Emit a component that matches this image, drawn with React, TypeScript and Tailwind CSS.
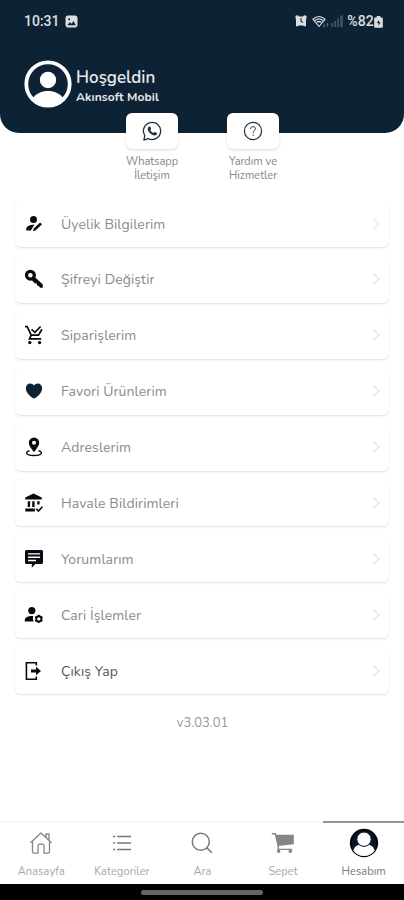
import React from 'react';
import { IoHeart } from 'react-icons/io5';

const UserEditIcon = () => (
  <svg viewBox="0 0 18 18" className="w-[18px] h-[18px]" fill="currentColor">
    <circle cx="8.500" cy="4.600" r="3.500" />
    <path d="M1.200 15.600v-1.500c0-2.600 3.400-4.200 7.600-4.300h.6L5.800 15.600Z" />
    <path d="m8 15.900.7-2.500 6.400-6 1.900 1.800-6.500 6.200Z" />
  </svg>
);

const KeyIcon = () => (
  <svg viewBox="0 0 20 20" className="w-5 h-5">
    <circle cx="6.400" cy="6.200" r="3.900" fill="none" stroke="currentColor" strokeWidth="3.200" />
    <path d="m9.500 6.800 9.300 8.700v3.200h-2.600l-1.700-1.900-1.300-.3-.4-1.900-2.100-.4-3.400-3.400Z" fill="currentColor" />
  </svg>
);

const CartCheckIcon = () => (
  <svg viewBox="0 0 20 20" className="w-5 h-5" fill="none" stroke="currentColor" strokeWidth="1.700">
    <path d="M1 1.700h2.200l4 8.500h7.300l3.500-6M7.200 10.200l-1.700 3.600h11.700M7.500 4.300l3.400 3 5.700-5.800" />
    <circle cx="5.800" cy="17.600" r="1.700" fill="currentColor" stroke="none" />
    <circle cx="15.600" cy="17.600" r="1.700" fill="currentColor" stroke="none" />
  </svg>
);

const PinIcon = () => (
  <svg viewBox="0 0 18 20" className="w-[18px] h-5">
    <path fillRule="evenodd" fill="currentColor" d="M9 .5a5.200 5.200 0 0 0-5.200 5.200C3.800 9.500 9 15 9 15s5.200-5.500 5.200-9.300A5.200 5.200 0 0 0 9 .5Zm0 3.300a2 2 0 1 1 0 4 2 2 0 0 1 0-4Z" />
    <path fill="none" stroke="currentColor" strokeWidth="1.400" d="M4.600 13.700c-1.900.6-3 1.300-3 2.100 0 1.500 3.300 2.700 7.400 2.700s7.400-1.200 7.400-2.700c0-.8-1.100-1.500-3-2.100" />
  </svg>
);

const BankIcon = () => (
  <svg viewBox="0 0 20 20" className="w-5 h-5" fill="currentColor">
    <path d="M9.500.5 1.200 4.600v1.900h16.600V4.600ZM3.700 8.200h2.400V14H3.700ZM8.200 8.200h2.400V14H8.200ZM13.200 8.200h2.400v3.300h-2.400ZM1.300 15.500h9.600v3H1.300Z" />
    <path d="m12.200 15.800 2.200 2.200 4-4.200" fill="none" stroke="currentColor" strokeWidth="1.600" />
  </svg>
);

const CommentIcon = () => (
  <svg viewBox="0 0 20 20" className="w-5 h-5">
    <path d="M2.500 1h15c.8 0 1.500.7 1.500 1.500v11c0 .8-.7 1.500-1.500 1.500h-6.300l-3.400 3.800V15H2.500c-.8 0-1.500-.7-1.500-1.500v-11C1 1.700 1.700 1 2.500 1Z" fill="currentColor" />
    <path d="M4 4.900h12M4 8.200h12M4 11.500h8" stroke="white" strokeWidth="1.400" />
  </svg>
);

const UserCogIcon = () => (
  <svg viewBox="0 0 20 18" className="w-5 h-[18px]">
    <circle cx="7.800" cy="4.600" r="3.600" fill="currentColor" />
    <path d="M.8 15.500v-1.700c0-2.500 3.500-3.900 7-3.900h1.400a6.300 6.300 0 0 0 .6 5.600Z" fill="currentColor" />
    <circle cx="14.800" cy="12.900" r="2.600" fill="none" stroke="currentColor" strokeWidth="1.900" />
    <path d="M14.800 8.700v1.600M14.800 15.500v1.600M11.200 10.800l1.300.8M17.100 14.200l1.300.8M11.200 15l1.300-.8M17.100 11.600l1.300-.8" stroke="currentColor" strokeWidth="1.700" />
  </svg>
);

const LogoutIcon = () => (
  <svg viewBox="0 0 20 20" className="w-5 h-5">
    <path d="M12.300 4.500V1.800H2.400v16.400h9.900v-2.700" fill="none" stroke="currentColor" strokeWidth="1.600" />
    <path d="M7 8.500h5V5.700l5 4.300-5 4.300v-2.800H7Z" fill="currentColor" />
  </svg>
);

const HeartIcon = () => <IoHeart size={20} className="text-[#0d2235]" />;

const ITEMS = [
  { label: 'Üyelik Bilgilerim', icon: UserEditIcon },
  { label: 'Şifreyi Değiştir', icon: KeyIcon },
  { label: 'Siparişlerim', icon: CartCheckIcon },
  { label: 'Favori Ürünlerim', icon: HeartIcon },
  { label: 'Adreslerim', icon: PinIcon },
  { label: 'Havale Bildirimleri', icon: BankIcon },
  { label: 'Yorumlarım', icon: CommentIcon },
  { label: 'Cari İşlemler', icon: UserCogIcon },
  { label: 'Çıkış Yap', icon: LogoutIcon, dark: true },
];

const StatusBar = () => (
  <div className="flex h-[42px] items-center justify-between pl-6 pr-[21px] text-white/85">
    <div className="flex items-center gap-[5px]">
      <span className="font-[Roboto] text-[14px] font-medium leading-none">10:31</span>
      <svg viewBox="0 0 13 13" className="w-[13px] h-[13px]">
        <rect x=".5" y=".5" width="12" height="12" rx="2.800" fill="currentColor" />
        <path d="m2.300 10.200 2.500-3 1.700 1.500 2-2.700 2.300 4.200Z" fill="#0d2235" />
        <circle cx="4.200" cy="4.200" r="1" fill="#0d2235" />
      </svg>
    </div>
    <div className="flex items-center">
      <svg viewBox="0 0 12 12" className="w-3 h-3">
        <path d="M.5.8 3 .3 4 1.500h4L9 .3l2.500.5v2.500L11 4.500v6.700H9L8 10.500H4l-1 .7H1V4.500L.5 3.300Z" fill="currentColor" />
        <path d="M6 3.200v3.100l2 1.300" fill="none" stroke="#0d2235" strokeWidth="1.100" />
      </svg>
      <svg viewBox="0 0 18 13" className="ml-[5px] w-[18px] h-[13px]" fill="none" stroke="currentColor">
        <path d="M1 4.200c3.600-3.600 8.400-3.600 12 0L7 11.500Z" strokeWidth="1.100" />
        <path d="M3 5.400c2.500-2 5.500-2 8 0M4.800 7.300c1.400-1 3-1 4.400 0" strokeWidth="1.300" />
        <path d="M12 8.500v3.500m-1.200-1.200L12 12l1.200-1.200M15.500 12V8.500m-1.200 1.200 1.200-1.200 1.200 1.200" strokeWidth=".8" opacity=".4" />
      </svg>
      <svg viewBox="0 0 12 12" className="ml-px w-3 h-3 text-white/20" fill="currentColor">
        <path d="M0 8h2v4H0ZM3 6h2v6H3ZM6 3.500h2V12H6ZM9 .5h3V12H9Z" />
      </svg>
      <span className="ml-1 font-[Roboto] text-[14px] font-medium leading-none tracking-[0.2px]">%82</span>
      <svg viewBox="0 0 9 12" className="mt-px w-[9px] h-3">
        <path d="M2.700 0h3.600v1.500H7.500c.8 0 1.300.5 1.300 1.300v7.700c0 .8-.5 1.300-1.300 1.300h-6C.7 11.800.2 11.300.2 10.500V2.800c0-.8.5-1.300 1.300-1.300h1.200Z" fill="currentColor" />
        <path d="m5 3.800-2.200 3.200h1.600v2.800l2.200-3.600H5Z" fill="#0d2235" />
      </svg>
    </div>
  </div>
);

const Shortcut: React.FC<{ lines: string[]; children: React.ReactNode }> = ({ lines, children }) => (
  <div className="flex w-[101px] flex-col items-center">
    <div className="flex h-[36px] w-[52px] items-center justify-center rounded-md bg-white text-[#25303a] shadow-[0_1px_3px_rgba(0,0,0,0.14)]">
      {children}
    </div>
    <div className="mt-[6px] text-center text-[11px] leading-[14px] text-[#858585]">
      {lines.map((line) => (
        <div key={line}>{line}</div>
      ))}
    </div>
  </div>
);

const NavItem: React.FC<{ label: string; active?: boolean; children: React.ReactNode }> = ({ label, active, children }) => (
  <div className={`flex flex-1 flex-col items-center border-t-2 ${active ? 'border-[#929599] text-[#777]' : 'border-[#f8f8f8] text-[#a8a8a8]'}`}>
    <div className="flex h-[39px] w-full items-center justify-center">{children}</div>
    <span className="mt-[3px] text-[11px] leading-[14px] tracking-[0.1px]">{label}</span>
  </div>
);

export default function App() {
  return (
    <div className="flex h-[900px] w-[404px] flex-col overflow-hidden bg-white font-['Nunito','Lato',sans-serif]">
      <header className="h-[133px] shrink-0 rounded-b-[19px] bg-[#0d2235]">
        <StatusBar />
        <div className="mt-[18px] flex items-center pl-6">
          <svg viewBox="0 0 48 48" className="w-12 h-12">
            <circle cx="24" cy="24" r="21.700" fill="none" stroke="white" strokeWidth="3.800" />
            <circle cx="24" cy="20" r="8.200" fill="white" />
            <path d="M8.500 38.500C12 33.500 17.500 31 24 31s12 2.500 15.500 7.500A22 22 0 0 1 24 46.500 22 22 0 0 1 8.500 38.500Z" fill="white" />
          </svg>
          <div className="ml-1 pt-[5px] text-white/90">
            <div className="text-[17px] font-semibold leading-[21px]">Hoşgeldin</div>
            <div className="text-[12px] font-bold leading-[19px] tracking-[0.1px]">Akınsoft Mobil</div>
          </div>
        </div>
      </header>

      {/* Shortcut buttons overlapping the header edge */}
      <div className="relative -mt-5 flex h-[87px] shrink-0 justify-center pl-px">
        <Shortcut lines={['Whatsapp', 'İletişim']}>
          <svg viewBox="0 0 22 22" className="w-[21px] h-[21px]">
            <path d="m2 20 .9-4.800a9 9 0 1 1 3.700 3.300Z" fill="none" stroke="currentColor" strokeWidth="1.400" strokeLinejoin="round" />
            <path d="M7.200 6c.6-.6 1.400-.4 1.700.3l.7 1.600c.2.600-.6 1.100-.9 1.600.7 1.400 1.800 2.400 3.200 3 .5-.3 1-1.200 1.600-1l1.700.8c.8.4.6 1.300.2 1.900-1 1.200-2.600 1.300-4.300.5-2.400-1.100-4-2.800-4.900-4.900-.5-1.500-.1-3 1-3.800Z" fill="currentColor" />
          </svg>
        </Shortcut>
        <Shortcut lines={['Yardım ve', 'Hizmetler']}>
          <svg viewBox="0 0 20 20" className="w-5 h-5" fill="none" stroke="currentColor" strokeWidth="1.200">
            <circle cx="10" cy="10" r="8.600" />
            <path d="M7.600 7.900c0-1.400 1-2.300 2.500-2.300s2.400.9 2.400 2.200c0 1.700-2.300 2-2.300 3.800v.6M10.200 13.500v1.300" strokeWidth="1" />
          </svg>
        </Shortcut>
      </div>

      <main className="flex flex-col gap-[8.900px] px-[15px]">
        {ITEMS.map(({ label, icon: Icon, dark }) => (
          <div
            key={label}
            className="flex h-[47px] items-center rounded-md bg-white pl-[9px] pr-[7px] shadow-[0_1px_2px_rgba(0,0,0,0.13)]"
          >
            <div className="flex w-5 shrink-0 items-center justify-center text-[#070b11]">
              <Icon />
            </div>
            <span className={`ml-[17px] flex-1 pt-px text-[14px] tracking-[0.1px] ${dark ? 'text-[#555]' : 'text-[#8a8a8a]'}`}>
              {label}
            </span>
            <svg viewBox="0 0 12 14" className="w-3 h-3.5" fill="none" stroke="#e8e8e8" strokeWidth="1.500">
              <path d="m3 1.500 6 5.500-6 5.500" />
            </svg>
          </div>
        ))}
      </main>

      <div className="mt-5 pl-px text-center text-[13px] leading-[18px] text-[#999]">v3.03.01</div>

      <nav className="mt-auto flex h-[63px] shrink-0 bg-white pl-px">
        <NavItem label="Anasayfa">
          <svg viewBox="0 0 24 24" className="w-6 h-6" fill="none" stroke="#858585" strokeWidth="1.300" strokeLinejoin="round">
            <path d="M1.500 11.800 12 2l10.500 9.800M17 6.500V3h3v6.500M3.500 10.500v10c0 1 .5 1.700 1.500 1.700h4v-7.500c0-1 .5-1.500 1.500-1.500h3c1 0 1.500.5 1.500 1.500v7.500h4c1 0 1.500-.7 1.500-1.700v-10" />
          </svg>
        </NavItem>
        <NavItem label="Kategoriler">
          <svg viewBox="0 0 20 18" className="w-5 h-[18px]" stroke="#777" strokeWidth="1.500">
            <path d="M1 2.500h2.200M5.200 2.500H19M1 9h2.200M5.200 9H19M1 15.500h2.200M5.200 15.500H19" />
          </svg>
        </NavItem>
        <NavItem label="Ara">
          <svg viewBox="0 0 22 22" className="w-[22px] h-[22px]" fill="none" stroke="#777" strokeWidth="1.500">
            <circle cx="9.800" cy="9.800" r="8.500" />
            <path d="m15.900 15.900 4.900 4.900" />
          </svg>
        </NavItem>
        <NavItem label="Sepet">
          <svg viewBox="0 0 24 22" className="w-6 h-[22px] text-[#858585]">
            <path d="M4.800 2.800h18v9.400L7 14Z" fill="currentColor" />
            <path d="M.8 1.700h3.500l2.900 12.200v3.500h14" fill="none" stroke="currentColor" strokeWidth="1.400" />
            <circle cx="7.600" cy="19.300" r="1.700" fill="currentColor" />
            <circle cx="19.300" cy="19.300" r="1.700" fill="currentColor" />
          </svg>
        </NavItem>
        <NavItem label="Hesabım" active>
          <svg viewBox="0 0 30 30" className="w-[30px] h-[30px]">
            <circle cx="15" cy="15" r="13.300" fill="#071326" stroke="#050608" strokeWidth="1.700" />
            <path d="M4.200 22.300c1.200-3.200 3.800-5.200 6.300-5.700 2.600 2 6.400 2 9 0 2.500.5 5.100 2.500 6.300 5.700A12.800 12.800 0 0 1 15 28.100 12.800 12.800 0 0 1 4.200 22.300Z" fill="white" />
            <circle cx="15" cy="11.200" r="7.200" fill="white" stroke="#071326" strokeWidth="1" />
          </svg>
        </NavItem>
      </nav>

      <div className="flex h-4 shrink-0 justify-center bg-black pt-[6px]">
        <div className="h-[5px] w-[122px] rounded-full bg-[#666]" />
      </div>
    </div>
  );
}
